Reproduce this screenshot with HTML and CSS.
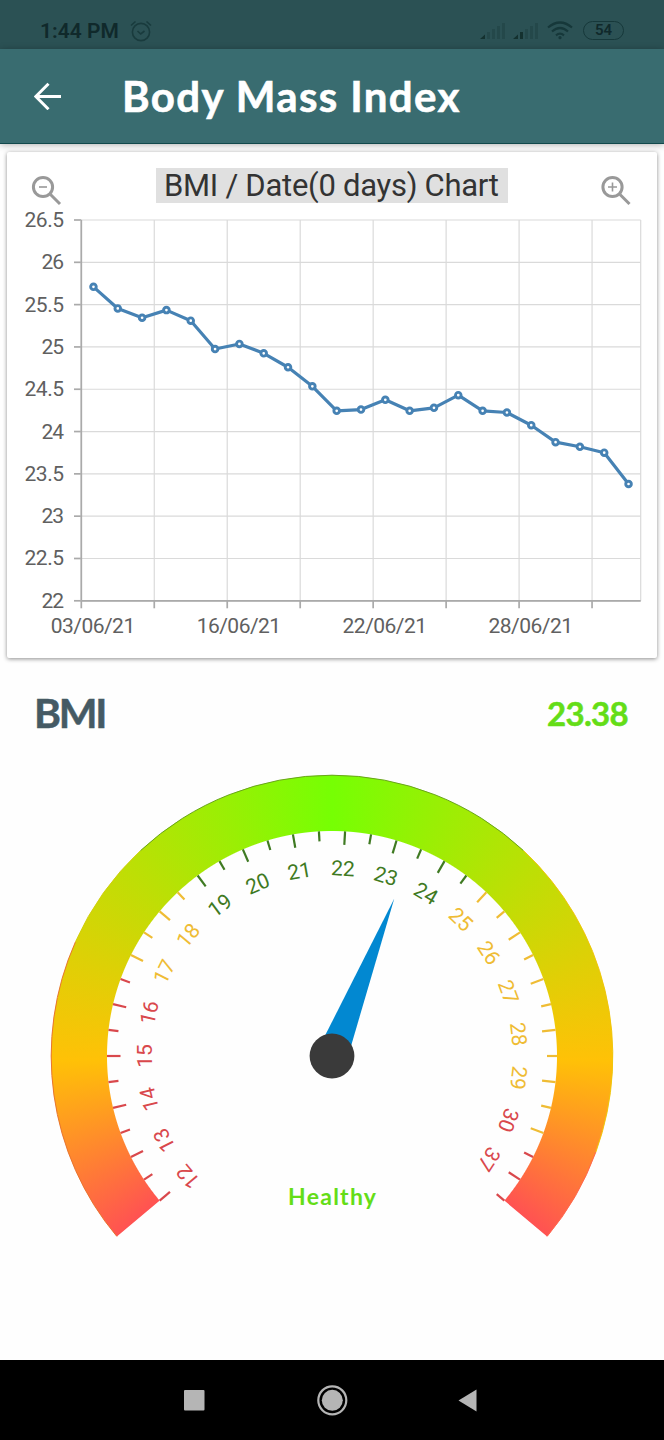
FILE: index.html
```html
<!DOCTYPE html>
<html lang="en">
<head>
    <meta charset="UTF-8">
    <meta name="viewport" content="width=device-width, initial-scale=1.0">
    <title>Body Mass Index</title>
    <link rel="stylesheet" href="styles.css">
</head>
<body>
    <div class="status-bar">
        <span class="time">1:44 PM</span>
        <svg class="alarm" width="22" height="22" viewBox="0 0 22 22">
            <circle cx="11" cy="12" r="8.6"/>
            <path d="M1 5.5 L5.5 1.5 M21 5.5 L16.5 1.5 M7.5 11 L10.7 14 L14.5 11"/>
        </svg>
        <div class="status-icons">
            <svg width="26" height="18" viewBox="0 0 26 18">
                <path class="on" d="M0 17 L5 12.5 V17 Z"/>
                <path class="off" d="M7 10 h3 v7 h-3z M12 7 h3 v10 h-3z M17 4 h3 v13 h-3z M22 1 h3 v16 h-3z"/>
            </svg>
            <svg width="26" height="18" viewBox="0 0 26 18">
                <path class="on" d="M0 17 L5 12.5 V17 Z M7 10 h3 v7 h-3z"/>
                <path class="off" d="M12 7 h3 v10 h-3z M17 4 h3 v13 h-3z M22 1 h3 v16 h-3z"/>
            </svg>
            <svg class="wifi" width="26" height="19" viewBox="0 0 26 19">
                <path d="M1 6.5 Q13 -3.5 25 6.5 M5 10.5 Q13 3.5 21 10.5 M9 14.3 Q13 11 17 14.3"/>
                <circle cx="13" cy="16.7" r="1.6"/>
            </svg>
            <span class="battery">54</span>
        </div>
    </div>
    <header>
        <svg class="back" width="28" height="28" viewBox="0 0 28 28">
            <path d="M27 14.5 H2.5 M14.5 1.8 L1.8 14.5 L14.5 27.2"/>
        </svg>
        <h1>Body Mass Index</h1>
    </header>
    <main>
        <div class="card">
            <svg id="chart" width="650" height="506" viewBox="7 152 650 506">
                <rect class="title-box" x="156" y="168" width="352" height="35"/>
                <text class="chart-title" x="164" y="196" textLength="335">BMI / Date(0 days) Chart</text>
                <g class="zoom-icon">
                    <circle cx="43" cy="187" r="9.6"/>
                    <path d="M50.5 194.5 L60 204"/>
                    <path class="sign" d="M39 187 H47"/>
                </g>
                <g class="zoom-icon">
                    <circle cx="612.5" cy="187" r="9.6"/>
                    <path d="M620 194.5 L629.5 204"/>
                    <path class="sign" d="M608 187 H617 M612.5 182.5 V191.5"/>
                </g>
            </svg>
        </div>
        <div class="summary">
            <h2>BMI</h2>
            <span class="value">23.38</span>
        </div>
        <div class="gauge">
            <div class="ring"></div>
            <svg id="dial" width="564" height="564" viewBox="-282 -282 564 564">
                <polygon class="needle" points="-15.5,0 0,-169 15.5,0" transform="rotate(21.6)"/>
                <circle class="hub" r="22.4"/>
                <text class="result" x="0" y="149" textLength="88">Healthy</text>
            </svg>
        </div>
    </main>
    <nav>
        <svg width="664" height="80" viewBox="0 0 664 80">
            <rect x="184" y="30" width="20.5" height="20.5" rx="1"/>
            <circle cx="332.3" cy="40.3" r="10.5"/>
            <circle class="outer" cx="332.3" cy="40.3" r="14"/>
            <path d="M458.5 40.5 L476.5 29.5 V51.5 Z"/>
        </svg>
    </nav>
    <script src="script.js"></script>
</body>
</html>
```
FILE: styles.css
```css
body {
    margin: 0;
    height: 1440px;
    display: flex;
    flex-direction: column;
    font-family: Lato, "Noto Sans", sans-serif;
    background-color: #fefefe;
}
.status-bar {
    box-sizing: border-box;
    height: 49px;
    padding: 12px 40px 0 40px;
    display: flex;
    align-items: center;
    background-color: #2b5154;
    color: #10292b;
    font-family: Roboto, sans-serif;
}
.time {
    width: 79px;
    font-size: 21px;
    font-weight: 600;
    white-space: nowrap;
}
.alarm {
    margin-left: 11px;
    fill: none;
    stroke: #193b3d;
    stroke-width: 1.6;
}
.status-icons {
    margin-left: auto;
    display: flex;
    align-items: center;
    gap: 7px;
}
.status-icons .on {
    fill: #14312f;
}
.status-icons .off {
    fill: #24484a;
}
.wifi {
    margin-left: 1px;
    fill: #16383a;
}
.wifi path {
    fill: none;
    stroke: #16383a;
    stroke-width: 2.2;
}
.battery {
    box-sizing: border-box;
    width: 41px;
    height: 19px;
    margin-left: 3px;
    border: 1.5px solid #16383a;
    border-radius: 10px;
    text-align: center;
    font-size: 15px;
    font-weight: 600;
    line-height: 17px;
}
header {
    position: relative;
    box-sizing: border-box;
    height: 95px;
    padding-left: 34px;
    display: flex;
    align-items: center;
    background-color: #396c70;
    border-bottom: 1px solid #12494c;
    box-shadow: 0 1px 7px rgba(0, 0, 0, 0.3);
}
.back {
    fill: none;
    stroke: #fff;
    stroke-width: 3;
}
h1 {
    margin: 0 0 0 60px;
    color: #fff;
    font-size: 42px;
    font-weight: 700;
    letter-spacing: 1.4px;
    -webkit-text-stroke: 0.6px #fff;
    white-space: nowrap;
}
main {
    flex: 1;
}
.card {
    width: 650px;
    height: 506px;
    margin: 8px 7px 0;
    background-color: #fff;
    border-radius: 2px;
    box-shadow: 0 1px 4px rgba(0, 0, 0, 0.45);
}
.card svg {
    display: block;
    font-family: Roboto, sans-serif;
}
.title-box {
    fill: #e0e0e0;
}
.chart-title {
    font-size: 31px;
    fill: #333;
}
.zoom-icon {
    fill: none;
    stroke: #999;
    stroke-width: 3;
}
.zoom-icon .sign {
    stroke-width: 1.6;
}
.grid {
    stroke: #dadada;
    stroke-width: 1.2;
}
.axis {
    stroke: #aaa;
    stroke-width: 1.7;
}
.label {
    font-size: 21px;
    fill: #606060;
}
.line {
    fill: none;
    stroke: #4682b4;
    stroke-width: 3.2;
    stroke-linejoin: round;
}
.point {
    fill: #fff;
    stroke: #4682b4;
    stroke-width: 2.9;
}
.summary {
    height: 109px;
    padding: 0 36px 0 34px;
    display: flex;
    align-items: center;
    justify-content: space-between;
}
h2 {
    margin: 0;
    color: #455a64;
    font-size: 41px;
    font-weight: 700;
    letter-spacing: -2.2px;
    -webkit-text-stroke: 0.5px #455a64;
}
.value {
    color: #64dd17;
    font-size: 33px;
    font-weight: 700;
    letter-spacing: -0.7px;
    -webkit-text-stroke: 0.5px #64dd17;
}
.gauge {
    position: relative;
    width: 564px;
    height: 564px;
    margin: 8px auto 0;
}
.ring {
    width: 562px;
    height: 562px;
    margin: 0 1px;
    border-radius: 50%;
    background: conic-gradient(from 225deg, #ff5252 5deg, #ffc107 44deg, #76ff03 135deg, #ffc107 226deg, #ff5252 265deg);
    clip-path: polygon(0 0, 100% 0, 100% 91.95%, 50% 50%, 0 91.95%);
    -webkit-mask: radial-gradient(circle, transparent 224.5px, #000 225.5px);
    mask: radial-gradient(circle, transparent 224.5px, #000 225.5px);
}
/* ticks, numbers and needle lie over the ring */
#dial {
    position: absolute;
    top: -1px;
    left: 0;
}
.tick {
    stroke-width: 2.2;
}
.number {
    font-family: Roboto, sans-serif;
    font-size: 21px;
    text-anchor: middle;
}
.rim {
    fill: none;
    stroke-width: 1;
}
.needle {
    fill: #0288d1;
}
.hub {
    fill: #3a3a3a;
}
.result {
    fill: #64dd17;
    font-size: 23px;
    font-weight: 700;
    text-anchor: middle;
}
nav {
    height: 80px;
    background-color: #000;
}
nav svg {
    display: block;
    fill: #b5b5b5;
}
nav .outer {
    fill: none;
    stroke: #b5b5b5;
    stroke-width: 2.2;
}
```
FILE: script.js
```js
const NS = 'http://www.w3.org/2000/svg';

function add(parent, tag, attrs, text) {
    const el = document.createElementNS(NS, tag);
    for (const key in attrs) el.setAttribute(key, attrs[key]);
    if (text) el.textContent = text;
    parent.appendChild(el);
    return el;
}

// BMI history chart
const bmi = [25.71, 25.455, 25.345, 25.435, 25.31, 24.975, 25.035, 24.925, 24.76, 24.535, 24.245, 24.26,
    24.375, 24.245, 24.28, 24.43, 24.245, 24.225, 24.075, 23.875, 23.82, 23.75, 23.38];
const dates = ['03/06/21', '16/06/21', '22/06/21', '28/06/21'];
const chart = document.getElementById('chart');
const left = 81.3, right = 640.7, top0 = 220, bottom = 600.8;
const step = (right - left) / bmi.length;
const yOf = v => top0 + (26.5 - v) / 4.5 * (bottom - top0);

for (let v = 22; v <= 26.5; v += 0.5) {
    const y = yOf(v);
    add(chart, 'line', { class: 'grid', x1: left, x2: right, y1: y, y2: y });
    add(chart, 'line', { class: 'axis', x1: 74, x2: left, y1: y, y2: y });
    add(chart, 'text', { class: 'label', x: 64, y: y + 7, 'text-anchor': 'end', textLength: v % 1 ? 39.5 : 22.5 }, String(v));
}
for (let i = 0; i < bmi.length; i += 3) {
    const x = left + i * step;
    add(chart, 'line', { class: 'grid', x1: x, x2: x, y1: top0, y2: bottom });
    add(chart, 'line', { class: 'axis', x1: x, x2: x, y1: bottom, y2: bottom + 7.5 });
}
add(chart, 'line', { class: 'grid', x1: right, x2: right, y1: top0, y2: bottom });
add(chart, 'line', { class: 'axis', x1: left, x2: left, y1: top0, y2: bottom });
add(chart, 'line', { class: 'axis', x1: left, x2: right, y1: bottom, y2: bottom });
dates.forEach((d, i) => {
    add(chart, 'text', { class: 'label', x: left + step * (i * 6 + 0.5) - 0.5, y: 633, 'text-anchor': 'middle', textLength: 84.5 }, d);
});
const points = bmi.map((v, i) => [left + step * (i + 0.5), yOf(v)]);
add(chart, 'polyline', { class: 'line', points: points.join(' ') });
points.forEach(p => add(chart, 'circle', { class: 'point', cx: p[0], cy: p[1], r: 2.8 }));

// Gauge, 39 half steps over 260 degrees
const dial = document.getElementById('dial');
const red = '#d9484c', yellow = '#efbc34', green = '#3f7a22';

function tickColor(i) {
    if (i < 10 || i > 36) return red;
    if (i < 14 || i > 25) return yellow;
    return green;
}
function at(r, deg) {
    const a = deg * Math.PI / 180;
    return (r * Math.sin(a)) + ' ' + (-r * Math.cos(a));
}
function rim(from, to, color) {
    add(dial, 'path', { class: 'rim', stroke: color, d: 'M' + at(280.8, from) + ' A280.8 280.8 0 0 1 ' + at(280.8, to) });
}
rim(-130, -66, '#e8752f');
rim(-66, -43, '#d2cf10');
rim(-43, 43, '#6aa51c');
rim(43, 110, '#f0c60c');
rim(110, 130, '#ff6a50');

for (let i = 0; i < 40; i++) {
    const angle = -130 + i * 260 / 39;
    const major = i % 2 === 0;
    add(dial, 'line', { class: 'tick', stroke: tickColor(i), y1: -225, y2: major ? -211.5 : -215, transform: 'rotate(' + angle + ')' });
    if (major) {
        const n = i === 38 ? 37 : 12 + i / 2;
        add(dial, 'text', { class: 'number', fill: i === 36 ? red : tickColor(i), y: -180.5, transform: 'rotate(' + angle + ')' }, String(n));
    }
}
```
